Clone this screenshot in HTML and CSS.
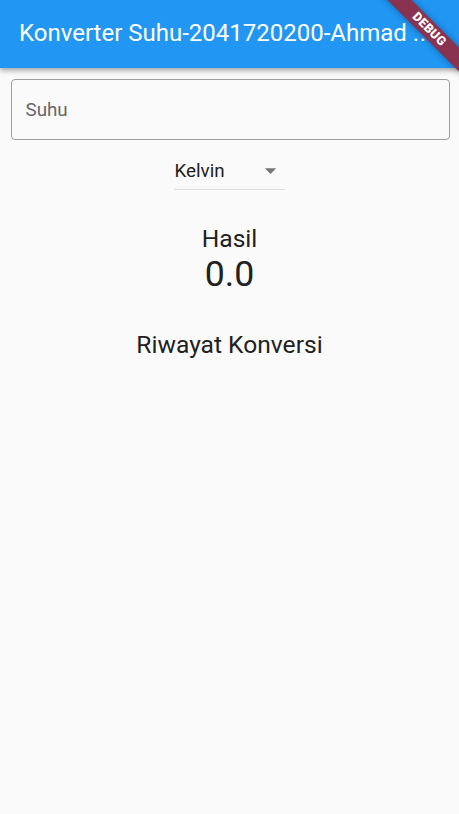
FILE: index.html
```html
<!DOCTYPE html>
<html lang="id">
<head>
<meta charset="utf-8">
<title>Konverter Suhu</title>
<link rel="stylesheet" href="styles.css">
</head>
<body>
<div class="app">
  <header class="appbar">
    <h1 class="title">Konverter Suhu-2041720200-Ahmad <span class="dots">...</span></h1>
  </header>
  <main class="content">
    <div class="field">
      <span class="placeholder">Suhu</span>
    </div>
    <div class="dropdown-row">
      <div class="dropdown">
        <span class="dropdown-value">Kelvin</span>
        <svg class="dropdown-icon" viewBox="0 0 24 24" width="27" height="27" aria-hidden="true">
          <path d="M7 10l5 5 5-5z" fill="#757575"/>
        </svg>
      </div>
    </div>
    <div class="result-label">Hasil</div>
    <div class="result-value">0.0</div>
    <div class="history-title">Riwayat Konversi</div>
  </main>
  <div class="banner"><span>DEBUG</span></div>
</div>
</body>
</html>
```
FILE: styles.css
```css
html, body {
  margin: 0;
  padding: 0;
}
body {
  background: #fafafa;
  font-family: Roboto, "Liberation Sans", sans-serif;
  color: #212121;
}
.app {
  position: relative;
  width: 459px;
  height: 814px;
  overflow: hidden;
  background: #fafafa;
}
.appbar {
  height: 68px;
  background: #2196f3;
  display: flex;
  align-items: center;
  padding-left: 19px;
  box-shadow: 0 2px 4px rgba(0,0,0,0.2), 0 4px 5px rgba(0,0,0,0.14);
  position: relative;
  z-index: 1;
}
.title {
  margin: 0;
  font-weight: 400;
  font-size: 24px;
  color: #ffffff;
  white-space: nowrap;
  padding-bottom: 2px;
}
.dots {
  letter-spacing: 0.5px;
}
.content {
  padding: 11px 10px 0 10px;
  display: flex;
  flex-direction: column;
  align-items: center;
}
.field {
  box-sizing: border-box;
  width: 439px;
  height: 61px;
  border: 1px solid #9e9e9e;
  border-radius: 4px;
  display: flex;
  align-items: center;
  padding-left: 14px;
  align-self: flex-start;
  margin-left: 0.5px;
}
.placeholder {
  font-size: 18.8px;
  color: #666666;
}
.dropdown-row {
  margin-top: 20px;
  display: flex;
  justify-content: center;
}
.dropdown {
  width: 111px;
  box-sizing: border-box;
  display: flex;
  align-items: center;
  justify-content: space-between;
  border-bottom: 1px solid #dedede;
  padding-bottom: 6px;
  height: 30px;
}
.dropdown-value {
  font-size: 18.8px;
  line-height: 1.172;
  color: #212121;
  padding-left: 0.5px;
}
.dropdown-icon {
  display: block;
  margin-right: 1px;
  margin-bottom: 3px;
}
.result-label {
  margin-top: 35px;
  font-size: 24.6px;
  line-height: 1.172;
  color: #212121;
}
.result-value {
  font-size: 35.7px;
  line-height: 1.172;
  color: #212121;
}
.history-title {
  margin-top: 35px;
  font-size: 24.6px;
  line-height: 1.172;
  color: #212121;
}
.banner {
  position: absolute;
  left: 359px;
  top: 21px;
  width: 140px;
  height: 17px;
  background: #8a3350;
  transform: rotate(45deg);
  display: flex;
  align-items: center;
  justify-content: center;
  box-shadow: 0 0 6px rgba(0,0,0,0.35);
  z-index: 2;
}
.banner span {
  color: #ffffff;
  font-size: 12.5px;
  font-weight: 900;
  line-height: 1;
  letter-spacing: 0.3px;
}
```
